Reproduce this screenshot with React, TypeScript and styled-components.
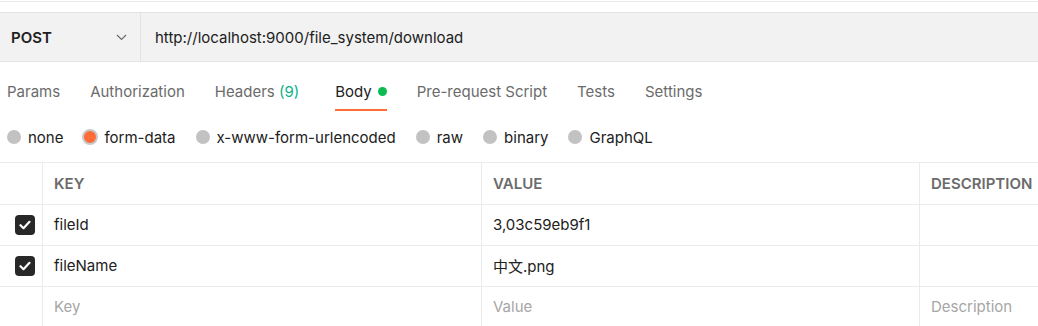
import React from 'react';
import styled, { createGlobalStyle } from 'styled-components';

const GlobalStyle = createGlobalStyle`
  html, body {
    margin: 0;
    padding: 0;
    background: #ffffff;
  }
  body {
    font-family: Inter, "Noto Sans", "Noto Sans CJK SC", sans-serif;
    font-size: 15px;
    color: #212121;
  }
`;

const Page = styled.div`
  width: 1038px;
  height: 326px;
  overflow: hidden;
`;

const TopEdge = styled.div`
  margin-top: 1px;
  height: 10px;
  border-top: 1px solid #ebebeb;
`;

const UrlBar = styled.div`
  display: flex;
  height: 48px;
  background: #f2f2f2;
  border-top: 1px solid #e3e3e3;
  border-bottom: 1px solid #e3e3e3;
`;

const MethodSelect = styled.div`
  width: 141px;
  box-sizing: border-box;
  display: flex;
  align-items: center;
  justify-content: space-between;
  padding: 0 13px 0 11px;
  border-right: 1px solid #e3e3e3;
  font-weight: 600;
  font-size: 15px;
  color: #212121;
`;

const UrlText = styled.div`
  display: flex;
  align-items: center;
  padding-left: 14px;
  font-size: 15px;
  color: #212121;
`;

const Tabs = styled.div`
  display: flex;
  height: 50px;
  padding-left: 7px;
  gap: 30px;
`;

const Tab = styled.div<{ $active?: boolean }>`
  display: flex;
  align-items: center;
  gap: 6px;
  height: 100%;
  box-sizing: border-box;
  padding-top: 8px;
  font-size: 15px;
  color: ${({ $active }) => ($active ? '#212121' : '#6b6b6b')};
  position: relative;

  &::after {
    content: '';
    display: ${({ $active }) => ($active ? 'block' : 'none')};
    position: absolute;
    left: 0;
    right: 0;
    top: 47px;
    height: 2px;
    background: #ff6c37;
  }
`;

const Count = styled.span`
  color: #0cb28a;
  margin-right: 6px;
`;

const Dot = styled.span`
  width: 9px;
  height: 9px;
  border-radius: 50%;
  background: #0cbb52;
  margin-top: 1px;
`;

const Radios = styled.div`
  display: flex;
  align-items: center;
  height: 50px;
  padding-left: 7px;
  gap: 20px;
`;

const RadioItem = styled.label`
  display: flex;
  align-items: center;
  gap: 7px;
  font-size: 15px;
  color: #212121;
`;

const RadioCircle = styled.span<{ $checked?: boolean }>`
  width: ${({ $checked }) => ($checked ? 16 : 14)}px;
  height: ${({ $checked }) => ($checked ? 16 : 14)}px;
  margin: ${({ $checked }) => ($checked ? '0 -1px' : '0')};
  box-sizing: border-box;
  border-radius: 50%;
  background: ${({ $checked }) => ($checked ? '#ff6c37' : '#c2c2c2')};
  border: ${({ $checked }) => ($checked ? '2px solid #c8c8c8' : 'none')};
`;

const Table = styled.div`
  border-top: 1px solid #ebebeb;
`;

const Row = styled.div<{ $head?: boolean }>`
  display: grid;
  grid-template-columns: 42px 439px 438px 1fr;
  height: ${({ $head }) => ($head ? 41 : 40)}px;
  border-bottom: 1px solid #ebebeb;
`;

const Cell = styled.div<{ $kind?: 'head' | 'value' | 'placeholder' }>`
  display: flex;
  align-items: center;
  padding-left: 11px;
  padding-bottom: ${({ $kind }) => ($kind === 'head' ? 0 : 2)}px;
  border-left: 1px solid #ebebeb;
  font-size: 15px;
  white-space: nowrap;
  overflow: hidden;
  font-weight: ${({ $kind }) => ($kind === 'head' ? 600 : 400)};
  color: ${({ $kind }) =>
    $kind === 'head' ? '#6b6b6b' : $kind === 'placeholder' ? '#a6a6a6' : '#212121'};
`;

const CheckCell = styled.div`
  display: flex;
  align-items: center;
  padding-left: 15px;
`;

const CheckBox = styled.span`
  width: 20px;
  height: 20px;
  border-radius: 4px;
  background: #282828;
  display: flex;
  align-items: center;
  justify-content: center;
`;

const Chevron = () => (
  <svg width="11" height="7" viewBox="0 0 11 7" fill="none">
    <path d="M1 1l4.5 4.5L10 1" stroke="#6b6b6b" strokeWidth="1.2" />
  </svg>
);

const Check = () => (
  <svg width="12" height="10" viewBox="0 0 12 10" fill="none">
    <path d="M1.5 5.2l3 3L10.5 1.8" stroke="#ffffff" strokeWidth="2.2" strokeLinecap="round" strokeLinejoin="round" />
  </svg>
);

const tabs = ['Params', 'Authorization', 'Headers', 'Body', 'Pre-request Script', 'Tests', 'Settings'];
const bodyTypes = ['none', 'form-data', 'x-www-form-urlencoded', 'raw', 'binary', 'GraphQL'];
const params = [
  { key: 'fileId', value: '3,03c59eb9f1' },
  { key: 'fileName', value: '中文.png' },
];

export default function App() {
  return (
    <Page>
      <GlobalStyle />
      <TopEdge />
      <UrlBar>
        <MethodSelect>
          POST
          <Chevron />
        </MethodSelect>
        <UrlText>http://localhost:9000/file_system/download</UrlText>
      </UrlBar>

      <Tabs>
        {tabs.map(t => (
          <Tab key={t} $active={t === 'Body'}>
            {t === 'Headers' ? (
              <span>
                Headers <Count>(9)</Count>
              </span>
            ) : (
              t
            )}
            {t === 'Body' && <Dot />}
          </Tab>
        ))}
      </Tabs>

      <Radios>
        {bodyTypes.map(b => (
          <RadioItem key={b}>
            <RadioCircle $checked={b === 'form-data'} />
            {b}
          </RadioItem>
        ))}
      </Radios>

      <Table>
        <Row $head>
          <CheckCell />
          <Cell $kind="head">KEY</Cell>
          <Cell $kind="head">VALUE</Cell>
          <Cell $kind="head">DESCRIPTION</Cell>
        </Row>
        {params.map(p => (
          <Row key={p.key}>
            <CheckCell>
              <CheckBox>
                <Check />
              </CheckBox>
            </CheckCell>
            <Cell $kind="value">{p.key}</Cell>
            <Cell $kind="value">{p.value}</Cell>
            <Cell $kind="value" />
          </Row>
        ))}
        <Row>
          <CheckCell />
          <Cell $kind="placeholder">Key</Cell>
          <Cell $kind="placeholder">Value</Cell>
          <Cell $kind="placeholder">Description</Cell>
        </Row>
      </Table>
    </Page>
  );
}
